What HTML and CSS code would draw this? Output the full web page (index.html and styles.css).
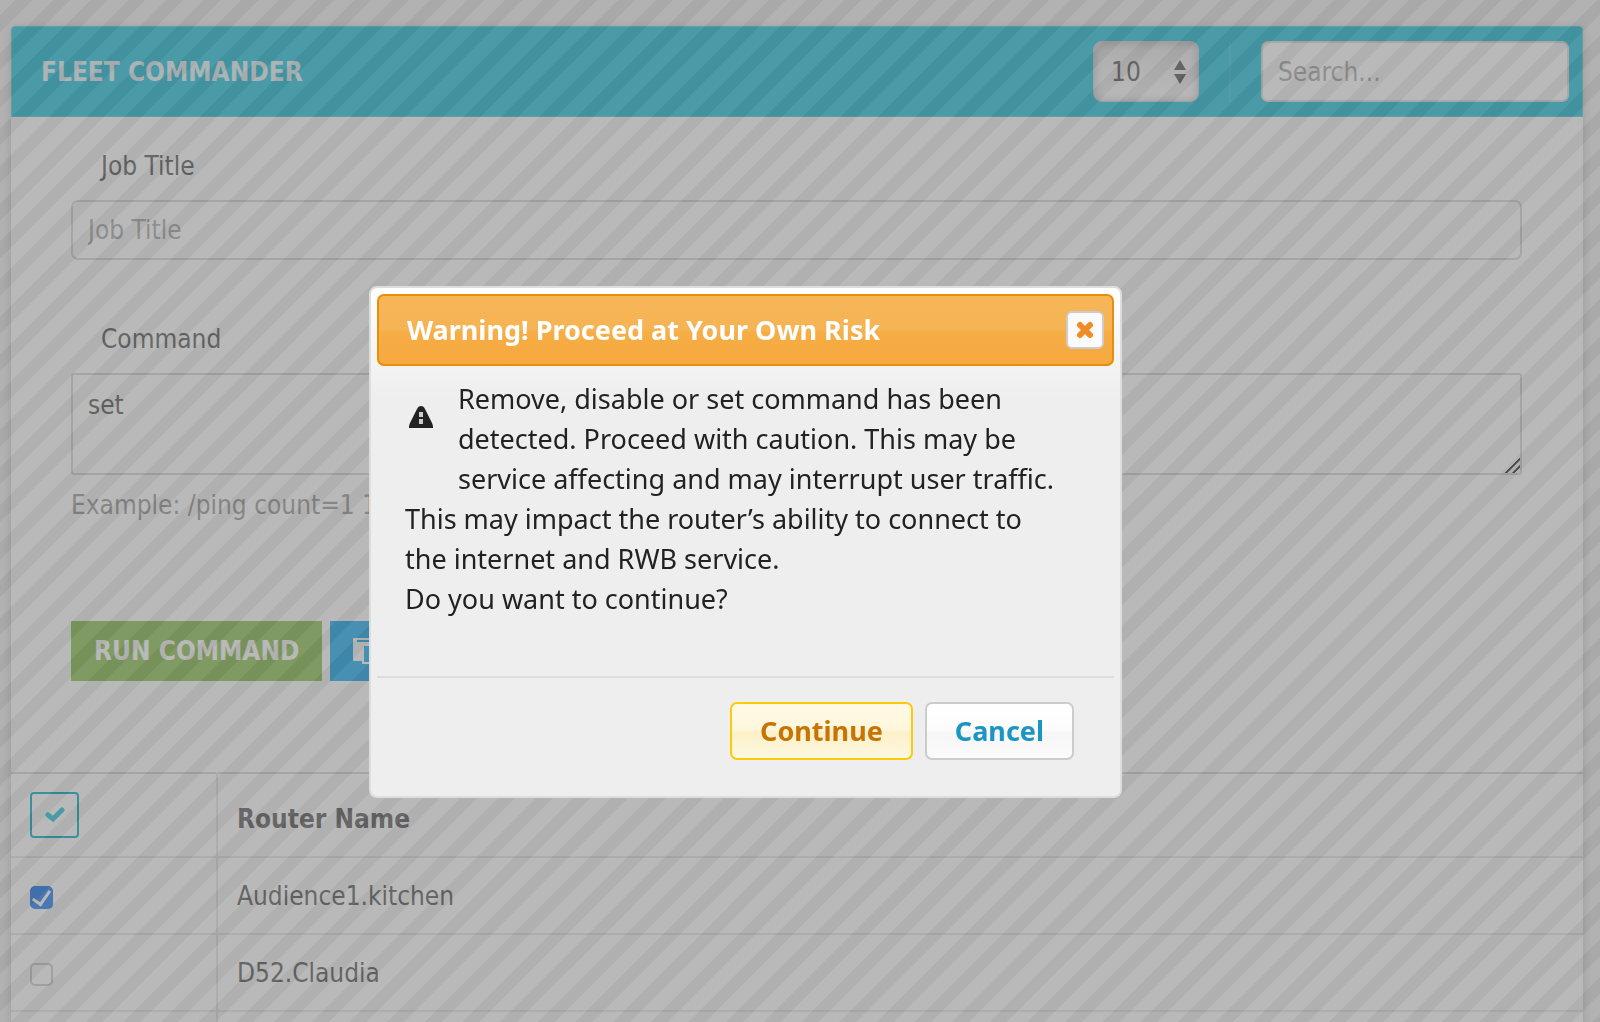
FILE: index.html
```
<!DOCTYPE html>
<html lang="en">
<head>
  <meta charset="UTF-8" />
  <title>Fleet Commander</title>
  <link rel="stylesheet" href="styles.css">
</head>
<body>

  <!-- Fleet commander panel -->
  <main class="panel">
    <header class="panel-header">
      <h1>FLEET COMMANDER</h1>
      <div class="page-size">
        <select aria-label="Rows per page">
          <option>10</option>
          <option>25</option>
          <option>50</option>
        </select>
        <svg class="select-arrows" width="12" height="24" viewBox="0 0 12 24" aria-hidden="true"><path d="M6 0l6 10H0zM0 14h12L6 24z" fill="#555"/></svg>
      </div>
      <span class="divider"></span>
      <input class="search" type="text" placeholder="Search..." aria-label="Search">
    </header>

    <form class="job-form">
      <label for="jobTitle">Job Title</label>
      <input class="field" type="text" id="jobTitle" placeholder="Job Title">

      <label for="command">Command</label>
      <textarea class="field" id="command">set</textarea>
      <p class="help">Example: /ping count=1 1</p>

      <div class="actions">
        <button type="button" class="btn btn-run">RUN COMMAND</button>
        <button type="button" class="btn btn-copy" aria-label="Copy">
          <svg width="26" height="26" viewBox="0 0 26 26"><rect width="20" height="23" rx="1" fill="#fff"/><path d="M4 2h13v2H4z" fill="#1dabf5"/><path d="M10 7h15v18H10z" fill="#1dabf5" stroke="#fff" stroke-width="2"/></svg>
        </button>
      </div>
    </form>

    <table class="routers">
      <thead>
        <tr>
          <th class="pick">
            <button type="button" class="check-all" aria-label="Select all">
              <svg width="20" height="16" viewBox="0 0 20 16"><path d="M3 8l5 4 9-9" fill="none" stroke="#21c1db" stroke-width="5" stroke-linecap="round" stroke-linejoin="miter"/></svg>
            </button>
          </th>
          <th>Router Name</th>
        </tr>
      </thead>
      <tbody>
        <tr>
          <td><input type="checkbox" id="r1" checked></td>
          <td><label for="r1">Audience1.kitchen</label></td>
        </tr>
        <tr>
          <td><input type="checkbox" id="r2"></td>
          <td><label for="r2">D52.Claudia</label></td>
        </tr>
        <tr>
          <td></td>
          <td></td>
        </tr>
      </tbody>
    </table>
  </main>

  <div class="overlay"></div>

  <!-- Warning dialog -->
  <div class="dialog" role="dialog" aria-modal="true" aria-labelledby="dialogTitle">
    <div class="dialog-title">
      <h2 id="dialogTitle">Warning! Proceed at Your Own Risk</h2>
      <button type="button" class="close-btn" aria-label="Close">
        <svg width="20" height="20" viewBox="0 0 20 20"><path d="M5 5l10 10M15 5L5 15" stroke="#f08c26" stroke-width="6" stroke-linecap="round"/></svg>
      </button>
    </div>
    <div class="dialog-content">
      <svg class="alert-icon" width="24" height="22" viewBox="0 0 24 22" aria-hidden="true"><path d="M12 0c2 0 3 1 4 3l7 14c1 2 1 4 1 5H0c0-1 0-3 1-5L8 3c1-2 2-3 4-3z" fill="#222"/><path d="M10 6h4v5h-4zM10 13h4v5h-4z" fill="#ccc"/></svg>
      <p>Remove, disable or set command has been<br>detected. Proceed with caution. This may be<br>service affecting and may interrupt user traffic.<br>This may impact the router’s ability to connect to<br>the internet and RWB service.<br>Do you want to continue?</p>
    </div>
    <div class="dialog-buttons">
      <button type="button" class="dlg-btn focus">Continue</button>
      <button type="button" class="dlg-btn">Cancel</button>
    </div>
  </div>

</body>
</html>
```
FILE: styles.css
```
* {
  box-sizing: border-box;
}

html {
  height: 100%;
  overflow: hidden;
}

body {
  margin: 0;
  height: 100%;
  padding: 26px 17px 0 11px;
  background: #f0f0f0;
  overflow: hidden;
  color: #5a5a5a;
  font-family: "DejaVu Sans Condensed", Tahoma, "Noto Sans", sans-serif;
  font-size: 26px;
  line-height: 36px;
}

input, textarea, select, button {
  font: inherit;
  color: inherit;
}

/* Panel */
.panel {
  background: #fff;
  border-radius: 4px 4px 0 0;
  box-shadow: 0 2px 8px rgba(0, 0, 0, 0.2);
}

.panel-header {
  display: flex;
  align-items: center;
  height: 91px;
  padding: 0 13px 0 29px;
  background: #21c1db;
  border: 1px solid #54c8d8;
  border-radius: 4px 4px 0 0;
}

.panel-header h1 {
  flex: 1;
  margin: 0;
  font-size: 26px;
  color: #e4f4f8;
}

.page-size {
  display: grid;
  align-items: center;
  width: 106px;
}

.page-size select {
  grid-area: 1 / 1;
  appearance: none;
  width: 100%;
  height: 61px;
  padding: 0 17px;
  border: 1px solid #ccc;
  border-radius: 9px;
  background: linear-gradient(#e4e4e4, #fff);
  box-shadow: inset 0 0 8px rgba(0, 0, 0, 0.25);
}

.select-arrows {
  grid-area: 1 / 1;
  justify-self: end;
  margin-right: 13px;
  pointer-events: none;
}

.divider {
  width: 2px;
  height: 61px;
  margin: 0 30px;
  background: #36c6dd;
}

.search {
  width: 308px;
  height: 61px;
  padding: 0 15px;
  border: 2px solid #ddd;
  border-radius: 7px;
  background: #fff;
}

::placeholder {
  color: #aaa;
  opacity: 1;
}

/* Job form */
.job-form {
  display: flex;
  flex-direction: column;
  padding: 31px 61px 91px 60px;
}

.job-form label {
  padding-left: 30px;
  margin-bottom: 16px;
}

.field {
  width: 100%;
  height: 60px;
  padding: 0 15px;
  margin-bottom: 61px;
  border: 2px solid #d6d6d6;
  border-radius: 7px;
  background: #fff;
}

textarea.field {
  height: 102px;
  padding: 12px 15px;
  margin-bottom: 12px;
  border-radius: 3px;
  resize: vertical;
}

textarea.field::-webkit-resizer {
  background: linear-gradient(135deg, transparent 48%, #333 50% 56%, transparent 58% 72%, #333 74% 80%, transparent 82%);
}

.help {
  margin: 0;
  color: #999;
}

.actions {
  display: flex;
  gap: 8px;
  margin-top: 98px;
}

.btn {
  height: 60px;
  padding: 0 23px;
  border: 0;
  color: #fff;
  font-weight: bold;
}

.btn-run {
  background: #8bc353;
}

.btn-copy {
  display: flex;
  align-items: center;
  background: #1dabf5;
}

/* Router list */
.routers {
  width: 100%;
  border-collapse: collapse;
  table-layout: fixed;
  border-top: 2px solid #d6d6d6;
}

.routers th,
.routers td {
  height: 77px;
  padding: 0 19px;
  border-bottom: 2px solid #e6e6e6;
  text-align: left;
}

.routers th {
  height: 84px;
  padding-top: 8px;
}

.routers .pick {
  width: 206px;
  padding-top: 0;
}

.routers td:first-child,
.routers th:first-child {
  border-right: 2px solid #e6e6e6;
}

.check-all {
  display: grid;
  place-content: center;
  width: 49px;
  height: 46px;
  padding: 0;
  border: 2px solid #00afc5;
  border-radius: 4px;
  background: #fff;
}

input[type="checkbox"] {
  appearance: none;
  display: grid;
  place-content: center;
  width: 23px;
  height: 23px;
  margin: 4px 0 0;
  border: 2px solid #ccc;
  border-radius: 5px;
  background: #fff;
}

input[type="checkbox"]:checked {
  border-color: #1e7cf0;
  background: #1e7cf0;
}

input[type="checkbox"]:checked::after {
  content: "";
  width: 8px;
  height: 15px;
  margin-bottom: 4px;
  border: solid #fff;
  border-width: 0 3px 3px 0;
  transform: rotate(35deg);
}

/* Striped overlay, six stripes per tile diagonal */
.overlay {
  position: fixed;
  inset: 0;
  opacity: 0.5;
  background: repeating-linear-gradient(135deg,
    #737373 0 3.5%, #616161 4% 11%, #737373 11.5% 16.6667%);
  background-size: 113px 113px;
  background-position: 7px 0;
}

/* Warning dialog */
.dialog {
  position: fixed;
  top: 286px;
  left: 369px;
  width: 753px;
  padding: 6px;
  border: 2px solid #ddd;
  border-radius: 8px;
  background: #eee linear-gradient(#fff, #eee) no-repeat;
  background-size: 100% 110px;
  color: #222;
  font-family: "Trebuchet MS", "Noto Sans", sans-serif;
  font-size: 27px;
  line-height: 40px;
}

.dialog-title {
  display: flex;
  align-items: center;
  justify-content: space-between;
  height: 72px;
  padding: 0 8px 0 28px;
  border: 2px solid #e78f08;
  border-radius: 7px;
  background: linear-gradient(#f6b658, #f6b353 50%, #f6ad45 54%, #f6a93f);
}

.dialog-title h2 {
  margin: 0;
  font-size: 27px;
  color: #fff;
}

.close-btn {
  display: grid;
  place-content: center;
  width: 38px;
  height: 38px;
  padding: 0;
  border: 2px solid #ccc;
  border-radius: 6px;
  background: #fafafa;
}

.dialog-content {
  padding: 13px 28px 57px;
}

.dialog-content p {
  margin: 0;
  white-space: nowrap;
}

.alert-icon {
  float: left;
  margin: 27px 25px 40px 4px;
}

.dialog-buttons {
  display: flex;
  justify-content: flex-end;
  gap: 12px;
  padding: 24px 40px 30px;
  border-top: 2px solid #ddd;
}

.dlg-btn {
  height: 58px;
  padding: 0 28px;
  border: 2px solid #ccc;
  border-radius: 7px;
  background: linear-gradient(#fff, #fcfcfc 48%, #f6f6f6 52%, #fbfbfb);
  color: #1c94c4;
  font-weight: bold;
}

.dlg-btn.focus {
  border-color: #fbcb09;
  background: linear-gradient(#fff9e4, #fff7dc 48%, #fcf0c8 52%, #fef8e0);
  color: #c77405;
}
```
